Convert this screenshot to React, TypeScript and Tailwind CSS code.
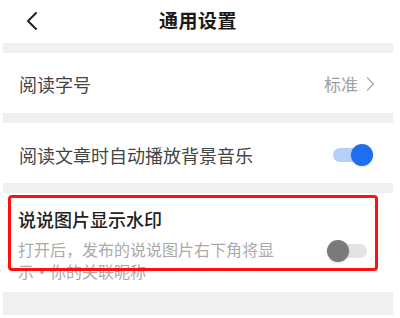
import React from 'react';

const font = { fontFamily: '"Noto Sans CJK SC", "Noto Sans", sans-serif' };

const Toggle: React.FC<{ on: boolean }> = ({ on }) => (
  <div className="relative w-[40px] h-[22px] flex items-center">
    <div className={`w-full h-[14px] rounded-full ${on ? 'bg-[#b6cff8]' : 'bg-[#e3e3e3]'}`} />
    <div
      className={`absolute top-0 w-[22px] h-[22px] rounded-full shadow ${
        on ? 'right-0 bg-[#1f6ef0]' : 'left-0 bg-[#7a7a7a]'
      }`}
    />
  </div>
);

export default function App() {
  return (
    <div className="w-[400px] h-[318px] bg-white overflow-hidden" style={font}>
      <div className="ml-[3px] w-[390px] flex flex-col">
        {/* Header */}
        <div className="relative h-[43px] flex items-center justify-center pb-[3px]">
          <svg className="absolute left-[22px] top-[11px]" width="14" height="20" viewBox="0 0 14 20">
            <path d="M11 2 L3 10 L11 18" fill="none" stroke="#222" strokeWidth="2" strokeLinecap="round" strokeLinejoin="round" />
          </svg>
          <span className="text-[19px] font-bold text-[#1a1a1a] tracking-[0.5px]">通用设置</span>
        </div>
        <div className="h-[10px] bg-[#f0f0f3]" />

        {/* Row 1 */}
        <div className="h-[60px] flex items-center justify-between pl-[16px] pr-[18px] pt-[2px]">
          <span className="text-[18px] text-[#444]">阅读字号</span>
          <div className="flex items-center gap-[8px] text-[#a0a0a0]">
            <span className="text-[17px]">标准</span>
            <svg width="9" height="16" viewBox="0 0 9 16">
              <path d="M1.5 2 L7.5 8 L1.5 14" fill="none" stroke="#b0b0b0" strokeWidth="1.6" strokeLinecap="round" strokeLinejoin="round" />
            </svg>
          </div>
        </div>
        <div className="h-[10px] bg-[#f0f0f3]" />

        {/* Row 2 */}
        <div className="h-[60px] flex items-center justify-between pl-[16px] pr-[20px] pt-[4px]">
          <span className="text-[18px] text-[#444]">阅读文章时自动播放背景音乐</span>
          <Toggle on />
        </div>
        <div className="h-[10px] bg-[#f0f0f3]" />

        {/* Row 3 */}
        <div className="relative h-[99px] flex items-start justify-between pl-[15px] pr-[26px] pt-[13px]">
          <div className="flex flex-col">
            <span className="text-[18px] font-medium text-[#222] leading-[26px]">说说图片显示水印</span>
            <span className="mt-[6px] w-[264px] text-[16px] text-[#aaa] leading-[22px]">
              打开后，发布的说说图片右下角将显示·你的关联昵称
            </span>
          </div>
          <div className="mt-[34px]">
            <Toggle on={false} />
          </div>
          <div className="absolute left-[5px] top-[2px] w-[370px] h-[76px] border-[3px] border-[#ff1010] rounded-[4px]" />
        </div>
        <div className="h-[23px] bg-[#f0f0f3]" />
      </div>
    </div>
  );
}
